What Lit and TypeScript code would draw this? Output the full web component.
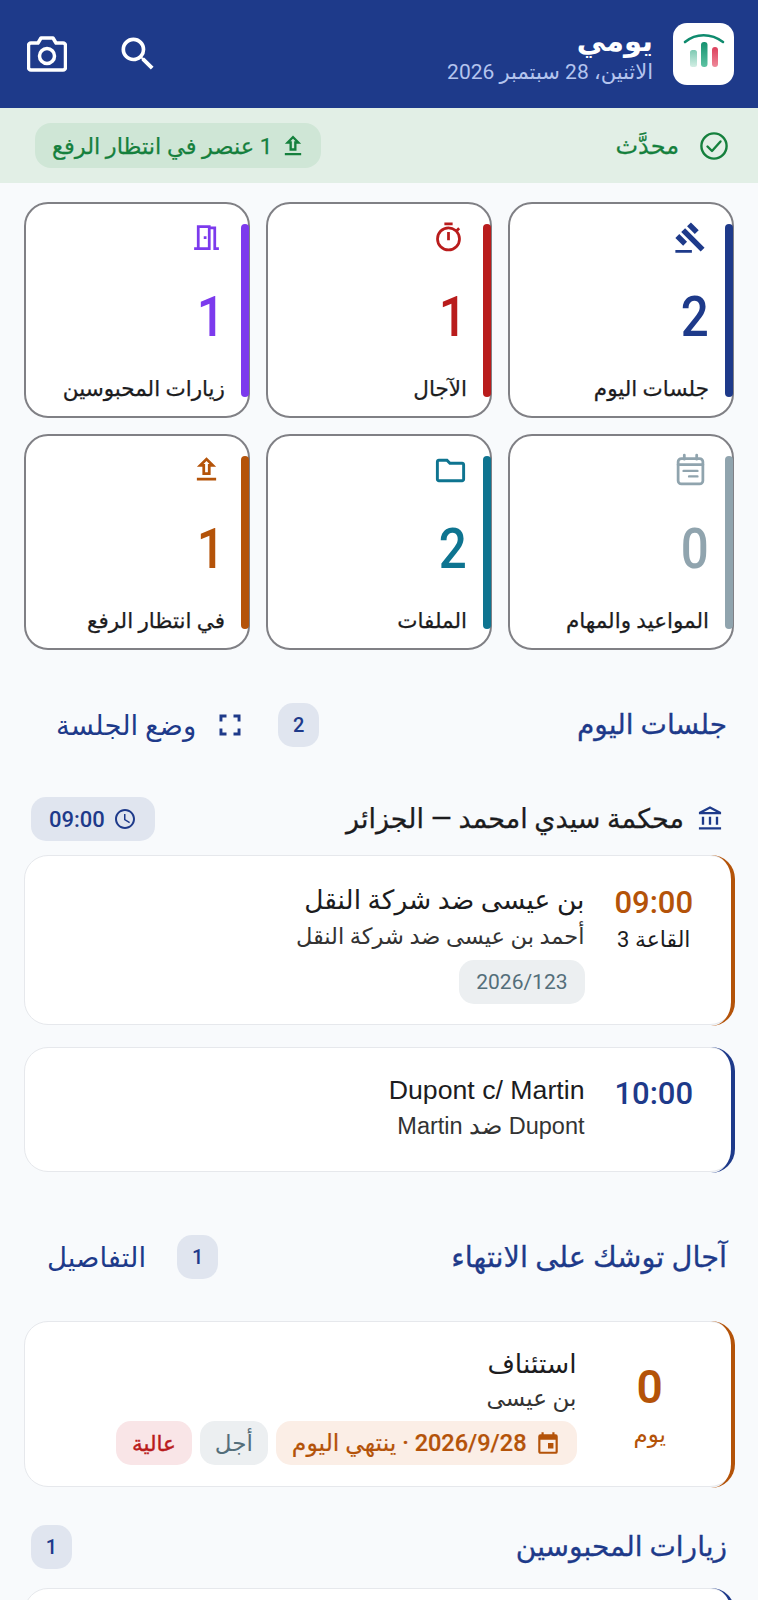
import { LitElement, html, css, svg } from "lit";
import { customElement } from "lit/decorators.js";

const ic = (d: unknown, size: number, cls = "") => html`<svg class="ic ${cls}" width=${size} height=${size} viewBox="0 0 24 24" fill="currentColor">${d}</svg>`;

const P = {
  search: svg`<path d="M15.5 14h-.79l-.28-.27A6.47 6.47 0 0 0 16 9.5 6.5 6.5 0 1 0 9.5 16c1.61 0 3.09-.59 4.23-1.57l.27.28v.79l5 4.99L20.49 19l-4.99-5zm-6 0C7.01 14 5 11.99 5 9.5S7.01 5 9.5 5 14 7.01 14 9.5 11.99 14 9.5 14z"/>`,
  upload: svg`<path d="M9 16h6v-6h4l-7-7-7 7h4v6zm3-10.17L14.17 8H13v6h-2V8H9.83L12 5.83zM5 18h14v2H5z"/>`,
  gavel: svg`<path d="M1 21h12v2H1zM5.245 8.07l2.83-2.827 14.14 14.142-2.828 2.828zM12.317 1l5.657 5.656-2.83 2.83-5.654-5.66zM3.825 9.485l5.657 5.657-2.828 2.828-5.657-5.657z"/>`,
  timer: svg`<path d="M15 1H9v2h6V1zm-4 13h2V8h-2v6zm8.03-6.61 1.42-1.42c-.43-.51-.9-.99-1.41-1.41l-1.42 1.42A8.962 8.962 0 0 0 12 4a9 9 0 1 0 9 9c0-2.12-.74-4.07-1.97-5.61zM12 20a7 7 0 1 1 0-14 7 7 0 0 1 0 14z"/>`,
  door: svg`<path d="M19 19V4h-4V3H5v16H3v2h12V6h2v15h4v-2h-2zm-6 0H7V5h6v14zm-3-8h2v2h-2z"/>`,
  event: svg`<g fill="none" stroke="currentColor" stroke-width="2" stroke-linecap="round" stroke-linejoin="round"><rect x="3" y="4" width="18" height="18.5" rx="2.4"/><path d="M3 8.5h18M7.5 1.5v3M16.5 1.5v3"/><path d="M7 13h10M11 17h6" stroke-width="1.8"/></g>`,
  folder: svg`<path d="M9.17 6l2 2H20v10H4V6h5.17M10 4H4c-1.1 0-1.99.9-1.99 2L2 18c0 1.1.9 2 2 2h16c1.1 0 2-.9 2-2V8c0-1.1-.9-2-2-2h-8l-2-2z"/>`,
  full: svg`<path d="M3 3h6v2.5H5.5V9H3zM15 3h6v6h-2.5V5.500H15zM3 15h2.500v3.500H9V21H3zM18.500 15H21v6h-6v-2.500h3.500z"/>`,
  bank: svg`<path d="M6.5 10h-2v7h2v-7zm6 0h-2v7h2v-7zm8.5 9H2v2h19v-2zm-2.500-9h-2v7h2v-7zm-7-6.740L16.710 6H6.290l5.210-2.740m0-2.260L2 6v2h19V6l-9.500-5z" transform="translate(.5 0)"/>`,
  clock: svg`<path d="M11.990 2C6.470 2 2 6.480 2 12s4.470 10 9.990 10C17.520 22 22 17.520 22 12S17.520 2 11.990 2zM12 20c-4.420 0-8-3.580-8-8s3.580-8 8-8 8 3.580 8 8-3.580 8-8 8zm.5-13H11v6l5.250 3.150.75-1.230-4.500-2.670z"/>`,
  cal: svg`<path d="M19 4h-1V2h-2v2H8V2H6v2H5a2 2 0 0 0-2 2v14c0 1.100.9 2 2 2h14a2 2 0 0 0 2-2V6a2 2 0 0 0-2-2zm0 16H5V9h14v11zm-2-3h-5v-5h5v5z"/>`,
};

const tiles = [
  { n: "2", l: "جلسات اليوم", c: "#1e3a8a", i: P.gavel, s: 33, k: "" },
  { n: "1", l: "الآجال", c: "#b91c1c", i: P.timer, s: 33, k: "" },
  { n: "1", l: "زيارات المحبوسين", c: "#7c3aed", i: P.door, s: 33, k: "" },
  { n: "0", l: "المواعيد والمهام", c: "#90a4ae", i: P.event, s: 33, k: "" },
  { n: "2", l: "الملفات", c: "#0e7490", i: P.folder, s: 35, k: "wide" },
  { n: "1", l: "في انتظار الرفع", c: "#b45309", i: P.upload, s: 33, k: "" },
];

@customElement("app-root")
export class AppRoot extends LitElement {
  static styles = css`
    :host { display: block; height: 1600px; overflow: hidden; background: #f8fafc; font-family: Roboto, "Noto Sans", "DejaVu Sans", sans-serif; color: #1c1c1e; }
    * { box-sizing: border-box; }
    .ic { display: block; flex: none; }
    .root { direction: rtl; }
    header { height: 108px; background: #1e3a8a; display: flex; align-items: center; padding: 0 24px 0 27px; gap: 20px; color: #fff; }
    .logo { width: 61px; height: 62px; border-radius: 14px; background: #fff; flex: none; display: block; }
    .ht { flex: 1; display: flex; flex-direction: column; padding-top: 2px; }
    .ht b { font-size: 29px; line-height: 32px; font-weight: 700; }
    .ht span { font-size: 21px; line-height: 26px; color: #b4c4ee; margin-top: 2px; }
    .hi { display: flex; align-items: center; gap: 49px; }
    .status { height: 75px; background: #e2efe6; display: flex; align-items: center; justify-content: space-between; padding: 0 30px 0 35px; color: #15803d; }
    .st { display: flex; align-items: center; gap: 21px; font-size: 24px; -webkit-text-stroke: .25px; }
    .pend { height: 45px; display: flex; align-items: center; gap: 7px; padding: 0 14px 0 17px; border-radius: 16px; background: #cfe6d6; font-size: 22.5px; -webkit-text-stroke: .25px; }
    .grid { display: grid; grid-template-columns: repeat(3, 226px); gap: 16px; padding: 19px 24px 0; }
    .tile { position: relative; height: 216px; background: #fff; border: 2px solid #808085; border-radius: 24px; padding: 17px 23px 0 0; display: flex; flex-direction: column; align-items: flex-start; }
    .bar { position: absolute; right: -1px; top: 20px; bottom: 19px; width: 8px; border-radius: 4px; }
    .tile .ic { margin-right: 2px; }
    .tile .wide { margin-right: -1px; margin-bottom: -2px; }
    .num { font-size: 56px; line-height: 60px; font-weight: 500; margin-top: 33px; transform: scaleX(.88); transform-origin: right center; }
    .lab { font-size: 21.5px; line-height: 28px; margin-top: 28px; white-space: nowrap; -webkit-text-stroke: .25px; }
    .sec { display: flex; align-items: center; padding: 0 31px; }
    .sec h2 { margin: 0; flex: 1; font-size: 28px; font-weight: 500; color: #1e3a8a; line-height: 44px; -webkit-text-stroke: .3px; }
    .sec h2.long { font-size: 28.8px; }
    .count { min-width: 41px; height: 44px; border-radius: 15px; padding: 0 14px; background: #e0e5ef; color: #1e3a8a; display: flex; align-items: center; justify-content: center; font-size: 20px; font-weight: 500; }
    .act { display: flex; align-items: center; color: #1e3a8a; font-size: 27.5px; }
    .act-mode { gap: 20px; margin-right: 34px; margin-left: 25px; }
    .act-details { margin-right: 31px; margin-left: 16px; }
    .s1 { margin-top: 53px; }
    .s2 { margin-top: 63px; }
    .s3 { margin-top: 38px; }
    .court { display: flex; align-items: center; justify-content: space-between; padding: 0 34px 0 31px; margin-top: 50px; }
    .ct { display: flex; align-items: center; gap: 12px; font-size: 27px; color: #1e3a8a; }
    .ct span { color: #1c1c1e; -webkit-text-stroke: .25px; }
    .tchip { height: 44px; border-radius: 15px; background: #e0e5ef; color: #1e3a8a; display: flex; align-items: center; gap: 8px; padding: 0 18px; font-size: 22px; font-weight: 500; }
    .card { position: relative; margin: 0 24px; background: #fff; border: 1.5px solid #e6e8ec; border-radius: 24px; display: flex; --c: #1e3a8a; }
    .card::after { content: ""; position: absolute; inset: -1.5px; border-radius: 24px; border-right: 4px solid var(--c); pointer-events: none; }
    .orange { --c: #b45309; }
    .c1 { height: 170px; margin-top: 14px; }
    .c2 { height: 125px; margin-top: 22px; }
    .c3 { height: 166px; margin-top: 42px; }
    .c4 { height: 120px; margin-top: 19px; }
    .time { width: 148.5px; flex: none; text-align: center; padding: 29px 10px 0 0; }
    .time b { display: block; font-size: 31px; font-weight: 500; line-height: 36px; color: var(--c); }
    .time span { display: block; font-size: 22px; line-height: 30px; margin-top: 4px; }
    .c2 .time { padding-top: 28px; }
    .c3 .time { width: 156.5px; padding-top: 35px; }
    .c3 .time b { font-size: 46px; line-height: 60px; font-weight: 600; }
    .c3 .time span { color: var(--c); font-size: 23px; margin-top: 3px; }
    .body { flex: 1; display: flex; flex-direction: column; align-items: flex-start; padding-top: 26px; }
    .c2 .body { padding-top: 24px; }
    .c3 .body { padding-top: 24px; }
    .tt { font-size: 26.5px; line-height: 36px; }
    .sb { font-size: 22.5px; line-height: 34px; color: #333; margin-top: 1px; }
    .c3 .sb { font-size: 23px; margin-top: 0; }
    .chip { height: 44px; border-radius: 15px; padding: 0 17px; display: flex; align-items: center; gap: 8px; font-size: 22px; background: #eceff1; color: #546e7a; }
    .case { margin-top: 7px; font-size: 21px; }
    .due { background: #fbeee6; color: #b45309; font-size: 23.5px; padding: 0 16px; font-weight: 500; -webkit-text-stroke: .2px; }
    .kind { font-size: 23px; padding: 0 15px; }
    .high { background: #f9e5e7; color: #b91c1c; font-size: 21.5px; padding: 0 16px; -webkit-text-stroke: .4px; }
    .lat { font-family: "Liberation Sans", sans-serif; }
    .lat .tt { font-size: 26.7px; }
    .lat .sb { font-size: 23.5px; }
    .row { display: flex; gap: 8px; margin-top: 5px; }
  `;

  render() {
    return html`<div class="root" dir="rtl">
      <header>
        <svg class="logo" viewBox="0 0 61 62" fill="none">
          <defs>
            <linearGradient id="a" x1="0" y1="0" x2="0" y2="1"><stop offset="0" stop-color="#7fcab3"/><stop offset="1" stop-color="#d2eee4"/></linearGradient>
            <linearGradient id="b" x1="0" y1="0" x2="0" y2="1"><stop offset="0" stop-color="#14916f"/><stop offset="1" stop-color="#5ec3a3"/></linearGradient>
            <linearGradient id="c" x1="0" y1="0" x2="0" y2="1"><stop offset="0" stop-color="#dc3f5c"/><stop offset="1" stop-color="#ee8a9a"/></linearGradient>
          </defs>
          <path d="M12 19C23 10 38 10 50 19" stroke="#0f8b6e" stroke-width="2.6" stroke-linecap="round"/>
          <rect x="17" y="27" width="7" height="17" rx="2.5" fill="url(#a)"/>
          <rect x="28" y="19" width="6.5" height="25" rx="3" fill="url(#b)"/>
          <rect x="39" y="24" width="6" height="20" rx="3" fill="url(#c)"/>
        </svg>
        <div class="ht"><b>يومي</b><span>الاثنين، 28 سبتمبر 2026</span></div>
        <div class="hi">
          ${ic(P.search, 44)}
          <svg class="ic" width="40" height="36" viewBox="0 0 40 36" fill="none" stroke="currentColor" stroke-width="3.5" stroke-linejoin="round">
            <path d="M4 7h7l3-5h12l3 5h7a2.5 2.5 0 0 1 2.5 2.5v22a2.5 2.5 0 0 1-2.5 2.5H4a2.5 2.5 0 0 1-2.5-2.5v-22A2.5 2.5 0 0 1 4 7z"/>
            <circle cx="20" cy="20" r="7.5"/>
          </svg>
        </div>
      </header>
      <div class="status">
        <div class="st">
          <svg class="ic" width="28" height="28" viewBox="0 0 28 28" fill="none" stroke="currentColor" stroke-width="2.4" stroke-linecap="round" stroke-linejoin="round"><circle cx="14" cy="14" r="12.6"/><path d="M7.5 14.5l4.5 4.500 8.500-9.500"/></svg>
          <span>محدَّث</span>
        </div>
        <div class="pend">${ic(P.upload, 28)}<span>1 عنصر في انتظار الرفع</span></div>
      </div>
      <div class="grid">
        ${tiles.map((t) => html`<div class="tile">
          <i class="bar" style="background:${t.c}"></i>
          <span style="color:${t.c}">${ic(t.i, t.s, t.k)}</span>
          <div class="num" style="color:${t.c}">${t.n}</div>
          <div class="lab">${t.l}</div>
        </div>`)}
      </div>
      <div class="sec s1">
        <h2>جلسات اليوم</h2>
        <div class="count">2</div>
        <div class="act act-mode">${ic(P.full, 28)}<span>وضع الجلسة</span></div>
      </div>
      <div class="court">
        <div class="ct">${ic(P.bank, 28)}<span>محكمة سيدي امحمد — الجزائر</span></div>
        <div class="tchip">${ic(P.clock, 24)}<span>09:00</span></div>
      </div>
      <div class="card orange c1">
        <div class="time"><b>09:00</b><span>القاعة 3</span></div>
        <div class="body">
          <div class="tt">بن عيسى ضد شركة النقل</div>
          <div class="sb">أحمد بن عيسى ضد شركة النقل</div>
          <div class="chip case">2026/123</div>
        </div>
      </div>
      <div class="card c2">
        <div class="time"><b>10:00</b></div>
        <div class="body lat">
          <div class="tt">Dupont c/ Martin</div>
          <div class="sb">Dupont ضد Martin</div>
        </div>
      </div>
      <div class="sec s2">
        <h2 class="long">آجال توشك على الانتهاء</h2>
        <div class="count">1</div>
        <div class="act act-details"><span>التفاصيل</span></div>
      </div>
      <div class="card orange c3">
        <div class="time"><b>0</b><span>يوم</span></div>
        <div class="body">
          <div class="tt">استئناف</div>
          <div class="sb">بن عيسى</div>
          <div class="row">
            <div class="chip due">${ic(P.cal, 26)}<span>2026/9/28 · ينتهي اليوم</span></div>
            <div class="chip kind">أجل</div>
            <div class="chip high">عالية</div>
          </div>
        </div>
      </div>
      <div class="sec s3">
        <h2>زيارات المحبوسين</h2>
        <div class="count">1</div>
      </div>
      <div class="card c4"></div>
    </div>`;
  }
}
